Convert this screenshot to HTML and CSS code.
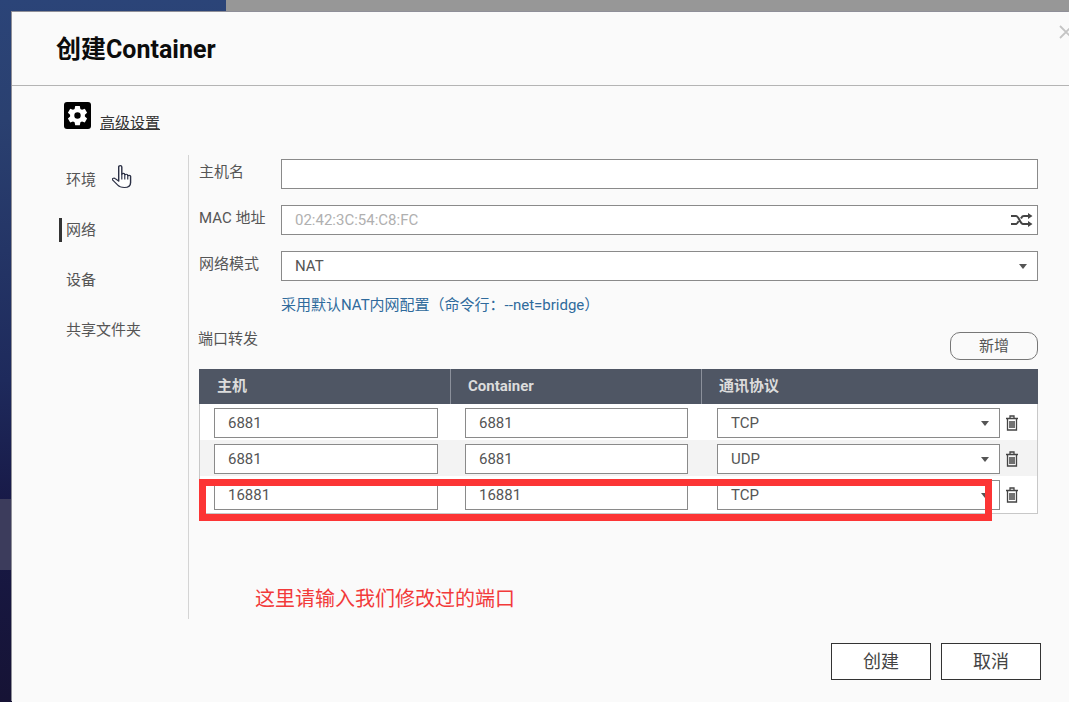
FILE: index.html
```html
<!DOCTYPE html>
<html lang="zh">
<head>
<meta charset="utf-8">
<title>创建Container</title>
<link rel="stylesheet" href="styles.css">
</head>
<body>
<div class="dialog">
  <svg class="close" viewBox="0 0 14 14" width="14" height="14"><path fill="none" stroke="#c4c4c4" stroke-width="1.800" d="M1 1l12 12M13 1L1 13"/></svg>
  <header class="head"><h1>创建Container</h1></header>
  <div class="advanced">
    <svg class="gear" viewBox="0 0 27 27" width="27" height="27"><rect width="27" height="27" rx="3" fill="#000"/><path fill="#fff" fill-rule="evenodd" d="M11.200 4h4.600l.6 2.900 1.600.9 2.800-1 2.300 4-2.200 1.900v1.800l2.200 1.900-2.300 4-2.800-1-1.600.9-.6 2.900h-4.600l-.6-2.900-1.600-.9-2.800 1-2.300-4 2.200-1.900v-1.800L3.900 10.800l2.300-4 2.800 1 1.600-.9zM13.500 10.300a3.200 3.200 0 1 0 0 6.400 3.200 3.200 0 0 0 0-6.400z"/></svg>
    <a class="adv-link">高级设置</a>
  </div>
  <div class="body">
    <nav class="side">
      <a class="side-item">环境</a>
      <a class="side-item active">网络</a>
      <a class="side-item">设备</a>
      <a class="side-item">共享文件夹</a>
      <svg class="hand" viewBox="1 0.500 15.500 24" preserveAspectRatio="none" width="20" height="24"><path fill="#fff" stroke="#2b3045" stroke-width="1.100" stroke-linejoin="round" d="M6.200 2.500c0-1.800 2.400-1.800 2.400 0v7.500c0-1.500 2.300-1.500 2.300 0v.8c0-1.400 2.300-1.400 2.300 0v1c0-1.300 2.200-1.300 2.200 0v6.200c0 3-1.800 5-4.800 5-2.600 0-4-.7-5.200-2.500L1.500 15.500c-.8-1.400 1-2.500 2-1.400l2.700 2.600z"/><path stroke="#2b3045" stroke-width=".9" d="M8.600 10v5M10.900 11v4M13.200 12v3"/></svg>
    </nav>
    <main class="content">
      <div class="field">
        <label class="lab">主机名</label>
        <div class="input"></div>
      </div>
      <div class="field">
        <label class="lab">MAC 地址</label>
        <div class="input muted">02:42:3C:54:C8:FC
          <svg class="shuffle" viewBox="0 0 22 14" width="22" height="14"><path fill="none" stroke="#444" stroke-width="2" d="M0 3h5c3 0 4 8 7 8h5M0 11h5c1.200 0 1.900-1.300 2.600-2.800M10 5.500C10.800 4 11 3 13 3h4"/><path fill="#444" d="M17 0l4.500 3L17 6zM17 8l4.500 3L17 14z"/></svg>
        </div>
      </div>
      <div class="field">
        <label class="lab">网络模式</label>
        <div class="input select">NAT<i class="caret"></i></div>
      </div>
      <p class="hint">采用默认NAT内网配置（命令行：--net=bridge）</p>
      <div class="ports-head">
        <span class="lab ports-title">端口转发</span>
        <button class="add">新增</button>
      </div>
      <div class="table">
        <div class="row thead"><div>主机</div><div>Container</div><div>通讯协议</div></div>
        <div class="row">
          <div class="cell"><div class="input small">6881</div></div>
          <div class="cell"><div class="input small">6881</div></div>
          <div class="cell proto"><div class="input small sel">TCP<i class="caret"></i></div><svg class="trash" viewBox="0 0 14 16" width="14" height="16"><path fill="none" stroke="#444" stroke-width="1.300" d="M1 3.500h12M2.500 3.500V15h9V3.500M5 3V1h4v2"/><path stroke="#444" stroke-width="1.500" d="M5 6v7M7 6v7M9 6v7"/></svg></div>
        </div>
        <div class="row alt">
          <div class="cell"><div class="input small">6881</div></div>
          <div class="cell"><div class="input small">6881</div></div>
          <div class="cell proto"><div class="input small sel">UDP<i class="caret"></i></div><svg class="trash" viewBox="0 0 14 16" width="14" height="16"><path fill="none" stroke="#444" stroke-width="1.300" d="M1 3.500h12M2.500 3.500V15h9V3.500M5 3V1h4v2"/><path stroke="#444" stroke-width="1.500" d="M5 6v7M7 6v7M9 6v7"/></svg></div>
        </div>
        <div class="row last">
          <div class="cell"><div class="input small">16881</div></div>
          <div class="cell"><div class="input small">16881</div></div>
          <div class="cell proto"><div class="input small sel">TCP<i class="caret"></i></div><svg class="trash" viewBox="0 0 14 16" width="14" height="16"><path fill="none" stroke="#444" stroke-width="1.300" d="M1 3.500h12M2.500 3.500V15h9V3.500M5 3V1h4v2"/><path stroke="#444" stroke-width="1.500" d="M5 6v7M7 6v7M9 6v7"/></svg></div>
        </div>
        <div class="redbox"></div>
      </div>
      <p class="note">这里请输入我们修改过的端口</p>
    </main>
  </div>
  <footer class="foot">
    <button class="btn">创建</button>
    <button class="btn">取消</button>
  </footer>
</div>
</body>
</html>
```
FILE: styles.css
```css
* { box-sizing: border-box; }
html, body { height: 100%; }
body {
  margin: 0;
  padding: 12px 0 0 12px;
  overflow: hidden;
  font-family: Roboto, "Noto Sans CJK SC", sans-serif;
  color: #555;
  background:
    linear-gradient(#979797, #979797) 226px 0 / 843px 12px no-repeat,
    linear-gradient(#3c3c5c, #3c3c5c) 0 499px / 12px 71px no-repeat,
    linear-gradient(#2b4478 0, #2a4070 120px, #1e2a5c 380px, #181a48 500px, #161335 702px);
}
.dialog {
  position: relative;
  width: 1057px;
  height: 690px;
  background: #fafafa;
  box-shadow: -1px -1px 0 #8f8f98;
}
.close {
  position: absolute;
  left: 1047px;
  top: 13px;
}
.head {
  height: 74px;
  padding: 21px 0 0 44px;
  border-bottom: 1px solid #b4b4b4;
}
.head h1 {
  margin: 0;
  font-size: 25px;
  line-height: 34px;
  font-weight: 700;
  color: #0c0c0c;
}
.advanced {
  display: flex;
  align-items: flex-start;
  gap: 9px;
  height: 69px;
  padding: 16px 0 0 52px;
}
.gear { flex: none; }
.adv-link {
  font-size: 15px;
  line-height: 20px;
  color: #333;
  text-decoration: underline;
  margin-top: 11px;
}
.body { display: flex; height: 464px; }
.side {
  position: relative;
  width: 129px;
  margin-left: 47px;
  padding-top: 13px;
  flex: none;
  display: flex;
  flex-direction: column;
  gap: 26px;
  font-size: 15px;
}
.side-item {
  height: 24px;
  line-height: 24px;
  padding-left: 7px;
  color: #555;
}
.side-item.active { border-left: 3px solid #333; padding-left: 4px; }
.hand { position: absolute; left: 53px; top: 10px; }
.content {
  flex: 1;
  border-left: 1px solid #d4d4d4;
  padding: 4px 31px 0 10px;
  min-width: 0;
}
.field {
  display: flex;
  align-items: flex-start;
  height: 30px;
  margin-bottom: 16px;
}
.lab {
  width: 82px;
  flex: none;
  font-size: 15px;
  line-height: 27px;
  color: #555;
}
.input {
  position: relative;
  flex: 1;
  height: 30px;
  background: #fff;
  border: 1px solid #8a8a8a;
  padding-left: 13px;
  font-size: 15px;
  line-height: 28px;
  color: #555;
}
.muted { color: #b0b0b0; }
.shuffle { position: absolute; right: 4px; top: 7px; }
.caret {
  position: absolute;
  right: 10px;
  top: 12px;
  width: 0;
  height: 0;
  border-left: 4px solid transparent;
  border-right: 4px solid transparent;
  border-top: 5px solid #555;
}
.hint {
  margin: -2px 0 0 82px;
  font-size: 15px;
  line-height: 20px;
  color: #2f6a9c;
}
.ports-head {
  display: flex;
  justify-content: space-between;
  align-items: flex-start;
  height: 37px;
  margin-top: 17px;
}
.ports-title { line-height: 20px; margin-top: -3px; margin-left: -1px; }
.add {
  width: 88px;
  height: 28px;
  background: #fafafa;
  border: 1px solid #777;
  border-radius: 10px;
  font: 15px/24px Roboto, "Noto Sans CJK SC", sans-serif;
  color: #555;
  padding: 0;
}
.table {
  position: relative;
  width: 839px;
  border: solid #c8c8c8;
  border-width: 0 1px 1px 1px;
  background: #fff;
}
.row {
  display: grid;
  grid-template-columns: 251px 251px 1fr;
  height: 36px;
}
.row.last { height: 37px; }
.row.alt { background: #f3f3f3; }
.thead {
  grid-template-columns: 252px 251px 1fr;
  height: 35px;
  background: #4f5664;
  margin: 0 -1px;
  color: #dcdcdc;
  font-size: 15px;
  font-weight: 700;
  line-height: 35px;
}
.thead > div { padding-left: 17px; border-right: 1px solid #8b909b; }
.thead > div:first-child { padding-left: 18px; }
.thead > div:last-child { border-right: 0; }
.cell { padding: 4px 13px 0 14px; }
.cell + .cell { padding-right: 14px; }
.cell.proto { display: flex; align-items: flex-start; padding: 4px 0 0 15px; }
.input.small { width: 100%; height: 30px; }
.input.sel { flex: none; width: 283px; line-height: 29px; }
.trash { flex: none; margin: 7px 0 0 5px; }
.redbox {
  position: absolute;
  left: -1px;
  top: 110px;
  width: 793px;
  height: 42px;
  border: 7px solid #fc3535;
  pointer-events: none;
}
.note {
  margin: 71px 0 0 56px;
  font-size: 20px;
  line-height: 28px;
  color: #f23a3a;
}
.foot {
  display: flex;
  justify-content: flex-end;
  gap: 10px;
  padding: 24px 28px 0 0;
}
.btn {
  width: 100px;
  height: 37px;
  background: #fff;
  border: 1px solid #333;
  font: 18px/24px Roboto, "Noto Sans CJK SC", sans-serif;
  color: #444;
  padding: 0;
}
```
